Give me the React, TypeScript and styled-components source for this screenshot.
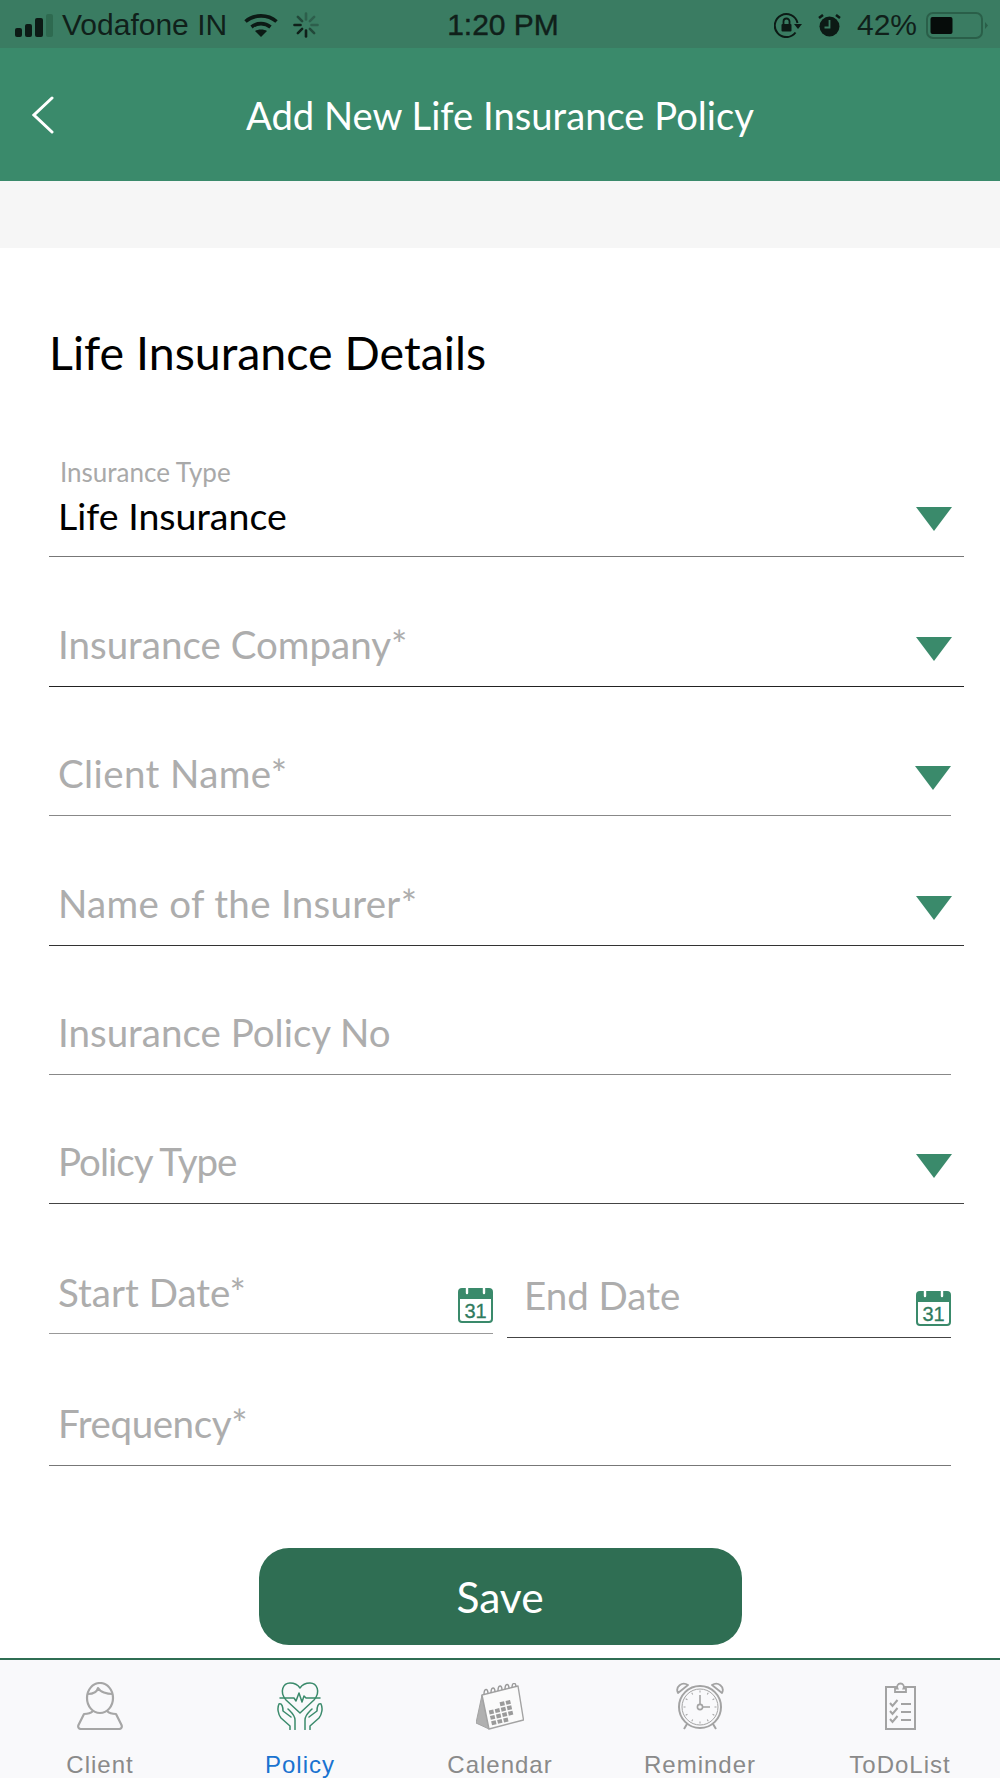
import React from 'react'
import styled, { createGlobalStyle } from 'styled-components'

const GlobalStyle = createGlobalStyle`
    html, body {
        margin: 0;
        padding: 0;
        background: #fff;
    }
    * {
        box-sizing: border-box;
    }
`

const Page = styled.div`
    width: 1000px;
    height: 1778px;
    display: flex;
    flex-direction: column;
    overflow: hidden;
    font-family: Lato, "Liberation Sans", sans-serif;
    background: #fff;
`

const StatusBar = styled.div`
    height: 48px;
    flex: none;
    background: #3a7c62;
    display: grid;
    grid-template-columns: 1fr auto 1fr;
    align-items: center;
    padding: 2px 12px 0 15px;
    color: #10201a;
    font-family: "Liberation Sans", sans-serif;
    font-size: 30px;
`

const StatusGroup = styled.div<{ $right?: boolean }>`
    display: flex;
    align-items: center;
    gap: ${(p) => (p.$right ? '16px' : '9px')};
    justify-content: ${(p) => (p.$right ? 'flex-end' : 'flex-start')};
`

const Carrier = styled.span`
    margin-right: 8px;
`

const Clock = styled.div`
    -webkit-text-stroke: 0.4px #10201a;
    margin: -1px 0 0 3px;
`

const BatteryWrap = styled.div`
    display: flex;
    margin-left: -7px;
`

const Header = styled.header`
    height: 133px;
    flex: none;
    background: #3a8a6b;
    display: grid;
    grid-template-columns: 1fr auto 1fr;
    align-items: center;
    padding: 0 32px;
    color: #fff;
`

const HeaderTitle = styled.h1`
    margin: 0;
    font-size: 38.2px;
    font-weight: 400;
`

const GraySpace = styled.div`
    height: 67px;
    flex: none;
    background: #f6f6f6;
`

const Content = styled.main`
    flex: 1;
    padding: 0 36px 0 49px;
    display: flex;
    flex-direction: column;
`

const Heading = styled.h2`
    margin: 82px 0 0;
    height: 98px;
    font-size: 46.5px;
    line-height: 44px;
    font-weight: 400;
    color: #000;
`

const Field = styled.div<{ $short?: boolean; $line: string; $extra?: number }>`
    height: ${(p) => 129.4 + (p.$extra || 0)}px;
    width: ${(p) => (p.$short ? '902px' : '100%')};
    flex: none;
    display: flex;
    align-items: flex-end;
    justify-content: space-between;
    padding: 0 0 20px 9px;
    border-bottom: 1.5px solid ${(p) => p.$line};
`

const DateRow = styled.div`
    display: flex;
    width: 902px;
    gap: 14px;
    height: 129.4px;
    flex: none;
`

const DateField = styled.div<{ $line: string; $offset: number }>`
    flex: 0 0 444px;
    height: ${(p) => 129.4 + p.$offset}px;
    display: flex;
    align-items: flex-end;
    justify-content: space-between;
    padding: 0 0 ${(p) => (p.$offset ? 11 : 10)}px ${(p) => (p.$offset ? 17 : 9)}px;
    border-bottom: 1.5px solid ${(p) => p.$line};
`

const FieldText = styled.div<{ $track?: number }>`
    font-size: 38.5px;
    line-height: 44px;
    letter-spacing: ${(p) => p.$track || 0}px;
    color: #adadad;
`

const DateText = styled(FieldText)`
    margin-bottom: 9px;
`

const Stacked = styled.div`
    display: flex;
    flex-direction: column;
    margin-bottom: -2px;
`

const SmallLabel = styled.div`
    font-size: 26px;
    line-height: 30px;
    color: #a9a9a9;
    margin: 0 0 7px 2px;
`

const ValueText = styled(FieldText)`
    font-size: 37.5px;
    color: #000;
`

const Arrow = styled.div<{ $flush?: boolean }>`
    width: 0;
    height: 0;
    border-left: 18px solid transparent;
    border-right: 18px solid transparent;
    border-top: 24px solid #3a8a6b;
    margin: 0 ${(p) => (p.$flush ? 0 : 12)}px 5px 0;
`

const Save = styled.button`
    align-self: center;
    margin: 82px 0 0 -13px;
    width: 483px;
    height: 97px;
    flex: none;
    border: none;
    border-radius: 30px;
    background: #2f6e53;
    color: #fff;
    font-family: Lato, sans-serif;
    font-size: 42.5px;
`

const Nav = styled.nav`
    height: 120px;
    flex: none;
    background: #f9f9fb;
    border-top: 2px solid #2f6e53;
    display: grid;
    grid-template-columns: repeat(5, 1fr);
`

const NavItem = styled.div<{ $active?: boolean }>`
    display: flex;
    flex-direction: column;
    align-items: center;
    padding-top: 21px;
    font-family: "Liberation Sans", sans-serif;
    font-size: 24px;
    letter-spacing: 1px;
    color: ${(p) => (p.$active ? '#1a73d0' : '#8a8a8a')};
`

const NavIcon = styled.div`
    height: 50px;
    margin-bottom: 20px;
    display: flex;
    align-items: center;
`

const Signal = () => (
    <svg width="38" height="23" viewBox="0 0 38 23">
        <rect x="0" y="14" width="7" height="9" rx="2" fill="#0c1a15" />
        <rect x="10" y="10" width="7" height="13" rx="2" fill="#0c1a15" />
        <rect x="20" y="4" width="8" height="19" rx="2" fill="#0c1a15" />
        <rect x="31" y="0" width="7" height="23" rx="2" fill="#2e6a50" />
    </svg>
)

const Wifi = () => (
    <svg width="34" height="24" viewBox="0 0 34 24" fill="none" stroke="#0c1a15" strokeWidth="3.6">
        <path d="M1.5 8.5 C10 1 24 1 32.5 8.5" />
        <path d="M7.5 14 C13 9.5 21 9.5 26.5 14" />
        <path d="M17 24 L11 18 C14 16 20 16 23 18 Z" fill="#0c1a15" stroke="none" />
    </svg>
)

const Spinner = () => (
    <svg width="32" height="26" viewBox="-6 0 32 26" stroke="#10201a" strokeWidth="2.6" strokeLinecap="round">
        {[0, 45, 90, 135, 180, 225, 270, 315].map((angle, i) => (
            <line key={angle} x1="13" y1="1.5" x2="13" y2="7.5" transform={`rotate(${angle} 13 13)`} opacity={i < 3 ? 0.3 : i === 3 || i === 7 ? 0.55 : 1} />
        ))}
    </svg>
)

const RotationLock = () => (
    <svg width="28" height="25" viewBox="0 0 28 25" fill="none" stroke="#0c1a15" strokeWidth="2">
        <path d="M21.5 19.5 A11.5 11.5 0 1 1 23.5 10" />
        <path d="M20 11 L28 11 L24 16 Z" fill="#0c1a15" stroke="none" />
        <rect x="7.5" y="11" width="10" height="7.5" rx="1" fill="#0c1a15" stroke="none" />
        <path d="M9.5 11 V8.5 A3 3 0 0 1 15.5 8.5 V11" strokeWidth="1.8" />
    </svg>
)

const AlarmSmall = () => (
    <svg width="23" height="23" viewBox="0 0 23 23">
        <circle cx="11.5" cy="12.5" r="10" fill="#0c1a15" />
        <path d="M1 4 L5 1 M22 4 L18 1" stroke="#0c1a15" strokeWidth="2.6" />
        <path d="M11.5 6 V13.5 H6.5" fill="none" stroke="#3a7c62" strokeWidth="1.8" />
    </svg>
)

const Battery = () => (
    <svg width="62" height="27" viewBox="0 0 62 27">
        <rect x="1" y="1" width="55" height="25" rx="6" fill="none" stroke="#2a5f49" strokeWidth="2" />
        <rect x="4.5" y="5" width="22" height="17" rx="2" fill="#060c0a" />
        <path d="M59 10 L62 13.5 L59 17 Z" fill="#2a5f49" />
    </svg>
)

const Back = () => (
    <svg width="22" height="38" viewBox="0 0 22 38" fill="none" stroke="#fff" strokeWidth="3" strokeLinecap="round">
        <path d="M20 2 L2 19 L20 36" />
    </svg>
)

const CalendarIcon = () => (
    <svg width="35" height="37" viewBox="0 0 35 37">
        <path d="M4 3 H31 A3 3 0 0 1 34 6 V33 A3 3 0 0 1 31 36 H4 A3 3 0 0 1 1 33 V6 A3 3 0 0 1 4 3 Z" fill="#fff" stroke="#3a8a6b" strokeWidth="2" />
        <path d="M1 13 V6 A3 3 0 0 1 4 3 H31 A3 3 0 0 1 34 6 V13 Z" fill="#3a8a6b" />
        <path d="M9 1 V7 M26 1 V7" stroke="#fff" strokeWidth="2.4" strokeLinecap="round" />
        <text x="17.5" y="32" textAnchor="middle" fontFamily="Liberation Sans, sans-serif" fontSize="20" fill="#2f7b5e" stroke="#2f7b5e" strokeWidth="0.3">31</text>
    </svg>
)

const ClientIcon = () => (
    <svg width="46" height="48" viewBox="0 0 46 48" fill="none" stroke="#a6a6a6" strokeWidth="2.2" strokeLinejoin="round">
        <ellipse cx="23" cy="16" rx="13" ry="15" />
        <path d="M10.5 12 C15 12 20 11 21 6 C23 10 30 12 35.5 12" />
        <path d="M16 29 C14 31 11 32 7 32 L1.5 43 C0.5 45.5 2 47 4 47 H42 C44 47 45.5 45.5 44.5 43 L39 32 C35 32 32 31 30 29" />
    </svg>
)

const PolicyIcon = () => (
    <svg width="46" height="48" viewBox="0 0 46 48" fill="none" stroke="#3a8a6b" strokeWidth="1.5" strokeLinejoin="round" strokeLinecap="round">
        <path d="M23 31 L9 18 C2 10 6 1 13 1 C18 1 21 3 23 6 C25 3 28 1 33 1 C40 1 44 10 37 18 Z" />
        <path d="M3 16 H17 L19 19 L22 11 L25 20 L27 14 L29 16 H43" />
        <path d="M2 22 C0 26 1 32 4 36 L13 44 V47.5 M2 22 C5 21 6 25 6 29 L14 35 M11 27 C14 30 18 33 18 38 V47.5" />
        <path d="M44 22 C46 26 45 32 42 36 L33 44 V47.5 M44 22 C41 21 40 25 40 29 L32 35 M35 27 C32 30 28 33 28 38 V47.5" />
    </svg>
)

const deskCells = [
    [2, 3],
    [0, 1, 2, 3],
    [0, 1, 2, 3],
    [0, 1, 2],
]

const DeskCalendarIcon = () => (
    <svg width="48" height="47" viewBox="0 0 48 47">
        <path d="M6 12 L0 40 L13 46 Z" fill="#b0b0b0" stroke="#a3a3a3" strokeWidth="1" strokeLinejoin="round" />
        <path d="M6 12 L42 3 L47.5 37 L13 46 Z" fill="#fbfbfb" stroke="#a3a3a3" strokeWidth="1.4" strokeLinejoin="round" />
        <path d="M8 11.5 C8 5 12 5 12 10.5 M15 10 C15 3.5 19 3.5 19 9 M22 8 C22 1.5 26 1.5 26 7 M29 6.5 C29 0 33 0 33 5.5 M36 5 C36 -1 40 -1 40 4" fill="none" stroke="#9a9a9a" strokeWidth="1.4" />
        {deskCells.map((cols, row) =>
            cols.map((col) => (
                <rect
                    key={`${row}-${col}`}
                    x={11.8 + col * 6 + row * 1.2}
                    y={21.6 - col * 1.4 + row * 5.4}
                    width="4.6"
                    height="4"
                    fill="#9a9a9a"
                    transform={`rotate(-13 ${14 + col * 6 + row * 1.2} ${23 - col * 1.4 + row * 5.4})`}
                />
            )),
        )}
    </svg>
)

const ReminderIcon = () => (
    <svg width="48" height="48" viewBox="0 0 48 48" fill="none" stroke="#a3a3a3" strokeWidth="2">
        <circle cx="24" cy="25" r="21" />
        <circle cx="24" cy="25" r="18" strokeWidth="1" />
        <path d="M2 11 C-1 5 6 -1 12 3 Z M46 11 C49 5 42 -1 36 3 Z" fill="#f9f9fb" strokeWidth="1.8" strokeLinejoin="round" />
        {[0, 30, 60, 90, 120, 150, 180, 210, 240, 270, 300, 330].map((angle) => (
            <line key={angle} x1="24" y1="8.5" x2="24" y2="10.5" strokeWidth="1" transform={`rotate(${angle} 24 25)`} />
        ))}
        <circle cx="24" cy="25" r="2.6" strokeWidth="1.6" />
        <path d="M24 13 V22.4 M26.6 25 H34" strokeWidth="1.6" />
        <path d="M11 42 L8 47 M37 42 L40 47" />
    </svg>
)

const TodoIcon = () => (
    <svg width="32" height="48" viewBox="0 0 32 48" fill="none" stroke="#a3a3a3" strokeWidth="2">
        <rect x="2" y="5" width="29" height="42" />
        <path d="M11 10 V6.5 H13.5 A3.4 3.4 0 1 1 19.5 6.5 H22 V10 Z" fill="#f9f9fb" strokeWidth="1.8" />
        <path d="M6 21 L8.5 24 L13.5 18 M6 29 L8.5 32 L13.5 26 M6 37 L8.5 40 L13.5 34" strokeWidth="2" />
        <path d="M17 22 H27 M17 30 H27 M17 38 H27" strokeWidth="2" />
    </svg>
)

const App: React.FunctionComponent = () => {
    return (
        <Page>
            <GlobalStyle />
            <StatusBar>
                <StatusGroup>
                    <Signal />
                    <Carrier>Vodafone IN</Carrier>
                    <Wifi />
                    <Spinner />
                </StatusGroup>
                <Clock>1:20 PM</Clock>
                <StatusGroup $right>
                    <RotationLock />
                    <AlarmSmall />
                    <span>42%</span>
                    <BatteryWrap><Battery /></BatteryWrap>
                </StatusGroup>
            </StatusBar>
            <Header>
                <Back />
                <HeaderTitle>Add New Life Insurance Policy</HeaderTitle>
            </Header>
            <GraySpace />
            <Content>
                <Heading>Life Insurance Details</Heading>
                <Field $line="#777">
                    <Stacked>
                        <SmallLabel>Insurance Type</SmallLabel>
                        <ValueText>Life Insurance</ValueText>
                    </Stacked>
                    <Arrow />
                </Field>
                <Field $line="#222">
                    <FieldText>Insurance Company*</FieldText>
                    <Arrow />
                </Field>
                <Field $short $line="#888">
                    <FieldText $track={0.4}>Client Name*</FieldText>
                    <Arrow $flush />
                </Field>
                <Field $line="#333">
                    <FieldText $track={0.3}>Name of the Insurer*</FieldText>
                    <Arrow />
                </Field>
                <Field $short $line="#888">
                    <FieldText>Insurance Policy No</FieldText>
                </Field>
                <Field $line="#444">
                    <FieldText $track={-1}>Policy Type</FieldText>
                    <Arrow />
                </Field>
                <DateRow>
                    <DateField $line="#999" $offset={0}>
                        <DateText>Start Date*</DateText>
                        <CalendarIcon />
                    </DateField>
                    <DateField $line="#444" $offset={4}>
                        <DateText>End Date</DateText>
                        <CalendarIcon />
                    </DateField>
                </DateRow>
                <Field $short $line="#777" $extra={3}>
                    <FieldText $track={-0.4}>Frequency*</FieldText>
                </Field>
                <Save>Save</Save>
            </Content>
            <Nav>
                <NavItem>
                    <NavIcon><ClientIcon /></NavIcon>
                    Client
                </NavItem>
                <NavItem $active>
                    <NavIcon><PolicyIcon /></NavIcon>
                    Policy
                </NavItem>
                <NavItem>
                    <NavIcon><DeskCalendarIcon /></NavIcon>
                    Calendar
                </NavItem>
                <NavItem>
                    <NavIcon><ReminderIcon /></NavIcon>
                    Reminder
                </NavItem>
                <NavItem>
                    <NavIcon><TodoIcon /></NavIcon>
                    ToDoList
                </NavItem>
            </Nav>
        </Page>
    )
}

export default App
